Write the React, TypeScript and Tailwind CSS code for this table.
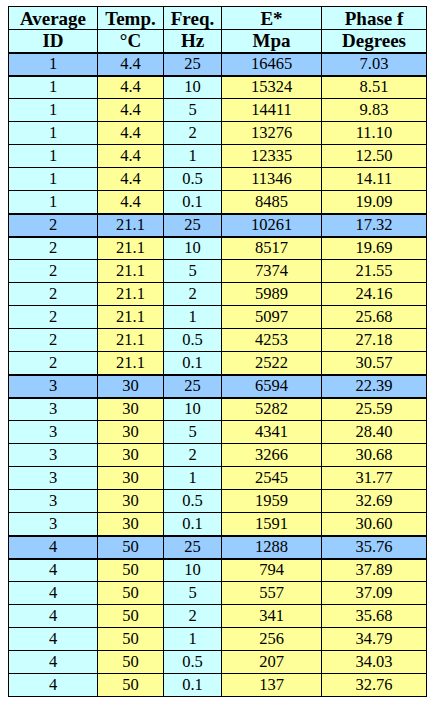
const ROWS: [string, string, string, string, string][] = [
  ["1", "4.4", "25", "16465", "7.03"],
  ["1", "4.4", "10", "15324", "8.51"],
  ["1", "4.4", "5", "14411", "9.83"],
  ["1", "4.4", "2", "13276", "11.10"],
  ["1", "4.4", "1", "12335", "12.50"],
  ["1", "4.4", "0.5", "11346", "14.11"],
  ["1", "4.4", "0.1", "8485", "19.09"],
  ["2", "21.1", "25", "10261", "17.32"],
  ["2", "21.1", "10", "8517", "19.69"],
  ["2", "21.1", "5", "7374", "21.55"],
  ["2", "21.1", "2", "5989", "24.16"],
  ["2", "21.1", "1", "5097", "25.68"],
  ["2", "21.1", "0.5", "4253", "27.18"],
  ["2", "21.1", "0.1", "2522", "30.57"],
  ["3", "30", "25", "6594", "22.39"],
  ["3", "30", "10", "5282", "25.59"],
  ["3", "30", "5", "4341", "28.40"],
  ["3", "30", "2", "3266", "30.68"],
  ["3", "30", "1", "2545", "31.77"],
  ["3", "30", "0.5", "1959", "32.69"],
  ["3", "30", "0.1", "1591", "30.60"],
  ["4", "50", "25", "1288", "35.76"],
  ["4", "50", "10", "794", "37.89"],
  ["4", "50", "5", "557", "37.09"],
  ["4", "50", "2", "341", "35.68"],
  ["4", "50", "1", "256", "34.79"],
  ["4", "50", "0.5", "207", "34.03"],
  ["4", "50", "0.1", "137", "32.76"],
];

// cyan / yellow pattern per column for ordinary rows
const COL_BG = ["bg-[#ccffff]", "bg-[#ffff99]", "bg-[#ccffff]", "bg-[#ffff99]", "bg-[#ffff99]"];
const COL_W = ["w-[89px]", "w-[66px]", "w-[58px]", "w-[100px]", "w-[105px]"];

const HEAD: [string, string][] = [
  ["Average", "ID"],
  ["Temp.", "°C"],
  ["Freq.", "Hz"],
  ["E*", "Mpa"],
  ["Phase f", "Degrees"],
];

export default function App() {
  return (
    <div className="min-h-[704px] w-[437px] bg-white pl-[8px] pt-[6px] font-['Liberation_Serif','Times_New_Roman',serif] text-black">
      <table className="border-collapse border-[1.5px] border-black">
        <thead>
          {[0, 1].map(r => (
            <tr key={r} className="h-[23px]">
              {HEAD.map((h, c) => (
                <th
                  key={c}
                  className={`${COL_W[c]} border border-black bg-[#ccffff] p-0 text-center text-[19px] leading-none font-bold ${r === 1 ? "border-b-2" : ""}`}
                >
                  {h[r]}
                </th>
              ))}
            </tr>
          ))}
        </thead>
        <tbody>
          {ROWS.map((row, i) => {
            const hi = row[2] === "25";
            return (
              <tr key={i} className="h-[23px]">
                {row.map((v, c) => (
                  <td
                    key={c}
                    className={`border border-black p-0 text-center text-[16.5px] leading-none ${hi ? "bg-[#99ccff] border-y-2" : COL_BG[c]}`}
                  >
                    {v}
                  </td>
                ))}
              </tr>
            );
          })}
        </tbody>
      </table>
    </div>
  );
}
